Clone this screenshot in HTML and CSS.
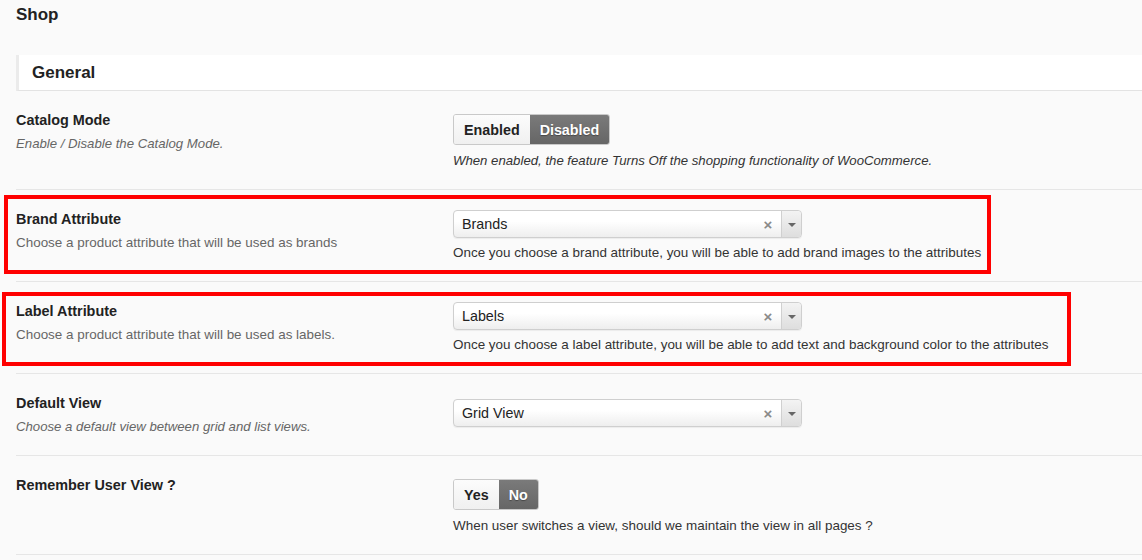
FILE: index.html
```html
<!DOCTYPE html>
<html>
<head>
<meta charset="utf-8">
<link rel="stylesheet" href="styles.css">
</head>
<body>
<div class="page">
  <h1 class="page-title">Shop</h1>
  <div class="section-head">General</div>

  <div class="row">
    <div class="label-col">
      <div class="opt-title">Catalog Mode</div>
      <div class="opt-desc italic">Enable / Disable the Catalog Mode.</div>
    </div>
    <div class="field-col">
      <div class="switch">
        <span class="sw-btn">Enabled</span><span class="sw-btn active">Disabled</span>
      </div>
      <div class="help italic">When enabled, the feature Turns Off the shopping functionality of WooCommerce.</div>
    </div>
  </div>

  <div class="row">
    <div class="mark mark-brand"></div>
    <div class="label-col">
      <div class="opt-title">Brand Attribute</div>
      <div class="opt-desc">Choose a product attribute that will be used as brands</div>
    </div>
    <div class="field-col">
      <div class="select">
        <span class="sel-value">Brands</span>
        <span class="sel-clear">×</span>
        <span class="sel-arrow"><span class="tri"></span></span>
      </div>
      <div class="help help-select">Once you choose a brand attribute, you will be able to add brand images to the attributes</div>
    </div>
  </div>

  <div class="row">
    <div class="mark mark-label"></div>
    <div class="label-col">
      <div class="opt-title">Label Attribute</div>
      <div class="opt-desc">Choose a product attribute that will be used as labels.</div>
    </div>
    <div class="field-col">
      <div class="select">
        <span class="sel-value">Labels</span>
        <span class="sel-clear">×</span>
        <span class="sel-arrow"><span class="tri"></span></span>
      </div>
      <div class="help help-select">Once you choose a label attribute, you will be able to add text and background color to the attributes</div>
    </div>
  </div>

  <div class="row">
    <div class="label-col">
      <div class="opt-title">Default View</div>
      <div class="opt-desc italic">Choose a default view between grid and list views.</div>
    </div>
    <div class="field-col">
      <div class="select select-low">
        <span class="sel-value">Grid View</span>
        <span class="sel-clear">×</span>
        <span class="sel-arrow"><span class="tri"></span></span>
      </div>
    </div>
  </div>

  <div class="row">
    <div class="label-col">
      <div class="opt-title">Remember User View ?</div>
    </div>
    <div class="field-col">
      <div class="switch">
        <span class="sw-btn">Yes</span><span class="sw-btn active">No</span>
      </div>
      <div class="help">When user switches a view, should we maintain the view in all pages ?</div>
    </div>
  </div>
</div>
</body>
</html>
```

FILE: styles.css
```css
html, body {
  margin: 0;
  padding: 0;
  background: #fafafa;
  font-family: "Liberation Sans", Arial, Helvetica, sans-serif;
  color: #222;
}

.page {
  padding-left: 16px;
}

.page-title {
  margin: 0;
  padding-top: 5px;
  font-size: 17px;
  line-height: 20px;
  font-weight: bold;
  color: #222;
}

.section-head {
  margin-top: 30px;
  background: #fff;
  border-left: 3px solid #ebebeb;
  border-bottom: 1px solid #e3e3e3;
  height: 35px;
  line-height: 35px;
  padding-left: 13px;
  font-size: 17px;
  font-weight: bold;
  color: #222;
}

.row {
  position: relative;
  display: flex;
  padding: 20px 0 19px;
  border-bottom: 1px solid #e6e6e6;
}

.label-col {
  width: 437px;
  flex: none;
}

.field-col {
  flex: 1;
}

.opt-title {
  font-size: 14.4px;
  line-height: 18px;
  font-weight: bold;
  color: #222;
}

.opt-desc {
  margin-top: 6px;
  font-size: 13.45px;
  line-height: 18px;
  color: #666;
}

.opt-desc.italic {
  font-size: 13.2px;
}

.italic {
  font-style: italic;
}

.help {
  margin-top: 7px;
  font-size: 13.45px;
  line-height: 18px;
  color: #333;
}

.help.italic {
  font-size: 13.2px;
}

.help-select {
  margin-top: 6px;
}

/* toggle buttons */
.switch {
  display: inline-flex;
  margin-top: 3px;
  border: 1px solid #c9c9c9;
  border-radius: 3px;
  overflow: hidden;
  height: 29px;
}

.sw-btn {
  display: flex;
  align-items: center;
  padding: 0 10px;
  font-size: 14.3px;
  font-weight: bold;
  color: #222;
  background: linear-gradient(#fcfcfc, #f0f0f0);
}

.sw-btn.active {
  background: linear-gradient(#7a7a7a, #666);
  color: #fff;
  text-shadow: 0 1px 1px rgba(0,0,0,0.35);
}

/* select */
.select {
  position: relative;
  display: flex;
  align-items: center;
  width: 347px;
  height: 26px;
  border: 1px solid #cfcfcf;
  border-radius: 4px;
  background: linear-gradient(#ffffff 40%, #eeeeee);
  box-shadow: 0 1px 1px rgba(0,0,0,0.06);
}

.select-low {
  margin-top: 5px;
}

.sel-value {
  flex: 1;
  padding-left: 8px;
  font-size: 14.3px;
  color: #222;
}

.sel-clear {
  width: 14px;
  margin-right: 6px;
  font-size: 15px;
  font-weight: bold;
  color: #8a8a8a;
  text-align: center;
}

.sel-arrow {
  display: flex;
  align-items: center;
  justify-content: center;
  align-self: stretch;
  width: 19px;
  border-left: 1px solid #d0d0d0;
  background: linear-gradient(#f3f3f3, #dedede);
  border-radius: 0 4px 4px 0;
}

.tri {
  width: 0;
  height: 0;
  border-left: 4px solid transparent;
  border-right: 4px solid transparent;
  border-top: 4px solid #666;
  margin-top: 2px;
}

/* red annotation frames */
.mark {
  position: absolute;
  border: 4px solid #ff0000;
  box-sizing: border-box;
  pointer-events: none;
}

.mark-brand {
  left: -12px;
  top: 5px;
  width: 987px;
  height: 79px;
}

.mark-label {
  left: -14px;
  top: 10px;
  width: 1069px;
  height: 74px;
}
```
